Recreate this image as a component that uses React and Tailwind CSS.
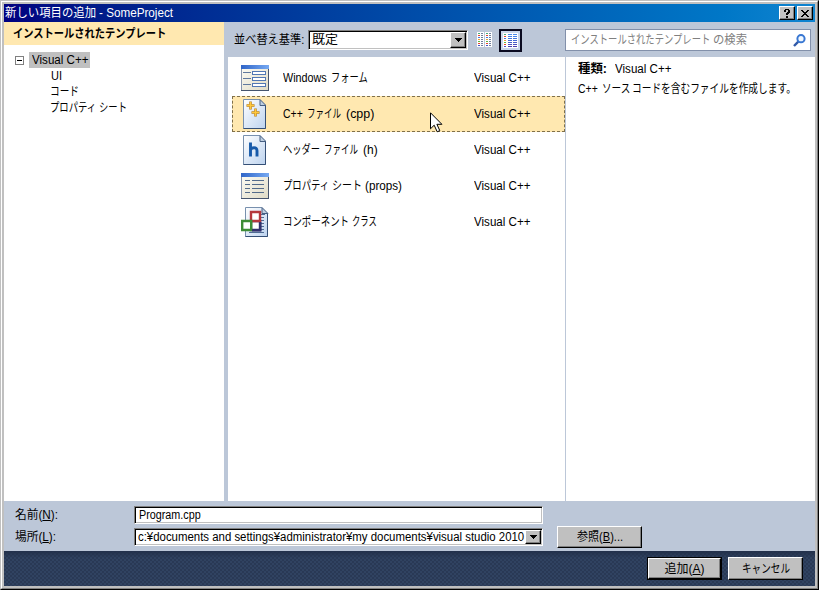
import { useLayoutEffect, useRef } from "react";

// A single-line label condensed or widened to the width of its box.
function T({ className = "", children }) {
  const outer = useRef(null);
  const inner = useRef(null);
  useLayoutEffect(() => {
    const w = outer.current.clientWidth;
    const n = inner.current.offsetWidth;
    if (n > 0) inner.current.style.transform = `scaleX(${w / n})`;
  }, []);
  return (
    <span ref={outer} className={`inline-block h-4 shrink-0 leading-4 ${className}`}>
      <span ref={inner} className="inline-block origin-left whitespace-nowrap">{children}</span>
    </span>
  );
}

const FormIcon = () => (
  <svg width="28" height="26" viewBox="0 0 28 26" shapeRendering="crispEdges">
    <rect width="28" height="26" fill="#8795ad" />
    <rect x="1" y="4" width="26" height="21" fill="url(#pane)" />
    <rect width="28" height="4" fill="url(#bar)" />
    <path d="M27.500 4v22M0 25.500h28" stroke="#46556e" />
    <path d="M2 7.500h8M2 13.500h8M2 19.500h8" stroke="#60799e" />
    <path d="M11.500 6.500h13v3h-13zM11.500 12.500h13v3h-13zM11.500 18.500h13v3h-13z" fill="#fff" stroke="#5278b4" />
  </svg>
);

const SheetIcon = () => (
  <svg width="28" height="26" viewBox="0 0 28 26" shapeRendering="crispEdges">
    <rect width="28" height="26" fill="#8795ad" />
    <rect x="1" y="4" width="26" height="21" fill="url(#pane)" />
    <rect width="28" height="4" fill="url(#bar)" />
    <path d="M27.500 4v22M0 25.500h28" stroke="#46556e" />
    <path d="M4 7.500h5M11 7.500h12M4 11.500h5M11 11.500h12M4 15.500h5M11 15.500h12M4 19.500h5M11 19.500h12" stroke="#536b8b" />
  </svg>
);

const Page = () => (
  <>
    <path d="M.5 .5h16l6 6v23h-22z" fill="url(#page)" stroke="#7890ae" />
    <path d="M22.500 6v23.500H.5" fill="none" stroke="#344f76" />
    <path d="M17 .5v6h6z" fill="#bdcee0" stroke="#465f82" />
  </>
);

const CppIcon = () => (
  <svg className="mr-[2px]" width="23" height="30" viewBox="0 0 23 30">
    <Page />
    <path d="M7.500 2.500v8M3.500 6.500h8M12.500 9.500v8M8.500 13.500h8" stroke="#b07a24" strokeWidth="2.600" />
    <path d="M7.500 3v7M4 6.500h7M12.500 10v7M9 13.500h7" stroke="#ffc83c" strokeWidth="1.600" />
  </svg>
);

const HeaderIcon = () => (
  <svg className="mr-[2px]" width="23" height="30" viewBox="0 0 23 30">
    <Page />
    <path d="M7.500 7.500v14M7.500 15c1-2.600 6.500-3.600 6.500.7v5.800" fill="none" stroke="#185aa9" strokeWidth="2.900" />
  </svg>
);

const ClassIcon = () => (
  <svg width="28" height="30" viewBox="0 0 28 30">
    <g transform="translate(4 0)"><Page /></g>
    <path d="M20 7.500h4M20 10.500h3M20 13.500h3M20 16.500h3M20 19.500h3M20 22.500h3M8 25.500h15" stroke="#4e6b94" />
    <path d="M10 14h9v9h-9z" fill="#fff" stroke="#30316c" strokeWidth="2.400" />
    <path d="M10 5h9v9h-9z" fill="#fff" stroke="#b5373c" strokeWidth="2.400" />
    <path d="M1.200 14h9v9h-9z" fill="#fff" stroke="#3d8c35" strokeWidth="2.400" />
    <path d="M11 23.500h8.500V15" fill="none" stroke="#30316c" strokeWidth="2" />
  </svg>
);

const rows = [
  { icon: <FormIcon />, label: <><T className="w-[44px]">Windows</T><T className="ml-1 w-[37px]">フォーム</T></> },
  { icon: <CppIcon />, selected: true, label: <><T className="w-[20px]">C++</T><T className="ml-1 w-[34px]">ファイル</T><T className="ml-[5px] w-[28px]">(cpp)</T></> },
  { icon: <HeaderIcon />, label: <><T className="w-[37px]">ヘッダー</T><T className="ml-1 w-[34px]">ファイル</T><T className="ml-[5px] w-[15px]">(h)</T></> },
  { icon: <SheetIcon />, label: <><T className="w-[46px]">プロパティ</T><T className="ml-[3px] w-[30px]">シート</T><T className="ml-[3px] w-[37px]">(props)</T></> },
  { icon: <ClassIcon />, label: <><T className="w-[66px]">コンポーネント</T><T className="ml-[3px] w-[25px]">クラス</T></> },
];

const bevel = "border border-t-white border-l-white border-r-black border-b-black bg-[#c0c0c0] shadow-[inset_-1px_-1px_0_#808080]";
const sunken = "border border-t-[#808080] border-l-[#808080] border-r-white border-b-white bg-white shadow-[inset_1px_1px_0_#000,inset_-1px_-1px_0_#c0c0c0]";

function DropButton({ className }) {
  return (
    <span className={`ml-auto flex w-4 shrink-0 items-center justify-center ${className} ${bevel}`}>
      <svg width="7" height="4" viewBox="0 0 7 4" shapeRendering="crispEdges"><path d="M0 0h7v1H6v1H5v1H4v1H3V3H2V2H1V1H0z" /></svg>
    </span>
  );
}

const tones = ["#4bab78", "#e8452d", "#4b79e0", "#e8a037", "#62b83c", "#e8452d", "#4b52c4"];
const bars = ["#4789ed", "#4380e8", "#4176df", "#4368d4", "#465cc9", "#494fbe", "#493eb0"];

function SmallList() {
  return (
    <svg width="15" height="15" viewBox="0 0 15 15" shapeRendering="crispEdges">
      <path d="M0 0h7v15H0zM8 0h7v15H8z" fill="#fff" />
      {tones.map((c, i) => (
        <g key={i}>
          <path d={`M1 ${i * 2 + 1}h2v1H1zM9 ${i * 2 + 1}h2v1H9z`} fill={c} />
          <path d={`M4 ${i * 2 + 1}h2v1H4zM12 ${i * 2 + 1}h2v1h-2z`} fill="#6f7f9c" />
        </g>
      ))}
    </svg>
  );
}

function MediumList() {
  return (
    <svg width="15" height="15" viewBox="0 0 15 15" shapeRendering="crispEdges">
      <rect width="15" height="15" fill="#fff" />
      {bars.map((c, i) => (
        <g key={i}>
          <path d={`M1 ${i * 2 + 1}h2v1H1z`} fill={tones[i]} />
          <path d={`M5 ${i * 2 + 1}h4v1H5zM10 ${i * 2 + 1}h4v1h-4z`} fill={c} />
        </g>
      ))}
    </svg>
  );
}

function TitleBar() {
  return (
    <header className="flex h-[18px] shrink-0 items-center bg-gradient-to-r from-[#000080] to-[#1084d0] pr-[2px] pl-px text-white">
      <T className="w-[91px]">新しい項目の追加</T>
      <T className="ml-[3px] w-[74px]">- SomeProject</T>
      <button className={`ml-auto flex h-[14px] w-4 items-center justify-center ${bevel}`}>
        <svg width="8" height="9" viewBox="0 0 8 9" shapeRendering="crispEdges"><path d="M2 0h4v1h1v3H6v1H5v1H3V4h1V3h1V1H3v2H1V1h1zM3 7h2v2H3z" /></svg>
      </button>
      <button className={`ml-[2px] flex h-[14px] w-4 items-center justify-center ${bevel}`}>
        <svg width="8" height="7" viewBox="0 0 8 7" shapeRendering="crispEdges"><path d="M0 0h2v1h1v1h2V1h1V0h2v1H7v1H6v1H5v1h1v1h1v1h1v1H6V6H5V5H3v1H2v1H0V6h1V5h1V4h1V3H2V2H1V1H0z" /></svg>
      </button>
    </header>
  );
}

function Sidebar() {
  return (
    <aside className="w-[220px] shrink-0 bg-white">
      <h2 className="flex h-[23px] items-center bg-[#ffe8b0] pl-[9px] font-bold"><T className="w-[153px]">インストールされたテンプレート</T></h2>
      <div className="mt-[7px] flex h-4 items-center pl-[11px]">
        <span className="flex h-[9px] w-[9px] items-center justify-center border border-[#808080]"><span className="h-px w-[5px] bg-black" /></span>
        <span className="ml-[5px] flex h-4 w-[61px] bg-[#c0c0c0] pl-[3px]"><T className="w-[56px]">Visual C++</T></span>
      </div>
      <ul className="pl-[46px]">
        <li className="flex h-4 pl-px"><T className="w-[11px]">UI</T></li>
        <li className="flex h-4"><T className="w-[29px]">コード</T></li>
        <li className="flex h-4"><T className="w-[46px]">プロパティ</T><T className="ml-[3px] w-[28px]">シート</T></li>
      </ul>
    </aside>
  );
}

function Toolbar() {
  return (
    <div className="flex h-[35px] shrink-0 items-start pt-[7px] pr-1 pl-[6px]">
      <T className="mt-[3px] w-[70px]">並べ替え基準:</T>
      <div className={`mt-px ml-1 flex h-5 w-[160px] items-start p-px pl-[3px] ${sunken}`}><T className="w-[26px]">既定</T><DropButton className="h-4" /></div>
      <div className="mt-[3px] ml-[9px]"><SmallList /></div>
      <div className="ml-[7px] flex h-[23px] w-[23px] items-center justify-center border-2 border-[#0a0a20] bg-[#c9d6ea]"><MediumList /></div>
      <div className="ml-auto flex h-[22px] w-[246px] items-center border border-[#8290aa] bg-white pr-1 pl-[5px] text-[#808080]">
        <T className="w-[139px]">インストールされたテンプレート</T><T className="ml-[3px] w-[34px]">の検索</T>
        <svg className="ml-auto" width="13" height="13" viewBox="0 0 13 13">
          <path d="M1 12l4.300-4.300" stroke="#3159a8" strokeWidth="2.400" />
          <circle cx="8" cy="4.700" r="3.600" fill="#f0f8ff" stroke="#3977d2" strokeWidth="2" />
        </svg>
      </div>
    </div>
  );
}

function TemplateList() {
  return (
    <ul className="w-[337px] bg-white pt-[3px] pl-1">
      {rows.map((r, i) => (
        <li key={i} className={r.selected ? "flex h-9 items-center border border-dashed border-[#80704a] bg-[#ffe8b0] pl-2" : "flex h-9 items-center pl-[9px]"}>
          <span className="flex w-7 justify-center">{r.icon}</span>
          <span className="ml-[14px] flex w-[191px]">{r.label}</span>
          <T className="w-[56px]">Visual C++</T>
        </li>
      ))}
    </ul>
  );
}

function Details() {
  return (
    <section className="flex-1 border-l border-[#bcc7d8] bg-white pt-1 pl-3">
      <div className="flex h-5"><T className="w-[29px] font-bold">種類:</T><T className="ml-[8px] w-[56px]">Visual C++</T></div>
      <div className="flex h-5"><T className="w-[20px]">C++</T><T className="ml-1 w-[28px]">ソース</T><T className="ml-[2px] w-[164px]">コードを含むファイルを作成します。</T></div>
    </section>
  );
}

function Fields() {
  return (
    <div className="flex h-[50px] shrink-0 pt-[5px] pl-[11px]">
      <div className="w-[119px] pt-px">
        <div className="flex h-[22px]"><T className="w-[43px]">名前(<u>N</u>):</T></div>
        <div className="flex h-[22px]"><T className="w-[41px]">場所(<u>L</u>):</T></div>
      </div>
      <div className="flex w-[409px] flex-col gap-1">
        <div className={`flex h-[18px] pl-1 ${sunken}`}><T className="w-[62px]">Program.cpp</T></div>
        <div className={`flex h-[18px] items-start py-px pr-px pl-[3px] ${sunken}`}>
          <T className="-mt-px w-[386px]">c:¥documents and settings¥administrator¥my documents¥visual studio 2010</T>
          <DropButton className="h-[14px]" />
        </div>
      </div>
      <button className={`mt-5 ml-[14px] flex h-[22px] w-[85px] items-center justify-center ${bevel}`}><T className="w-[46px]">参照(<u>B</u>)...</T></button>
    </div>
  );
}

export default function App() {
  return (
    <div className="h-[590px] w-[819px] border border-t-[#c0c0c0] border-r-black border-b-black border-l-[#c0c0c0] bg-[#c0c0c0] font-['Liberation_Sans','Noto_Sans_CJK_JP',sans-serif] text-[12px] text-black">
      <svg className="absolute h-0 w-0">
        <defs>
          <linearGradient id="bar"><stop stopColor="#2f65c8" /><stop offset="1" stopColor="#76a9f2" /></linearGradient>
          <linearGradient id="pane" x2="1" y2="1"><stop stopColor="#fbfaf2" /><stop offset="1" stopColor="#dfdbc7" /></linearGradient>
          <linearGradient id="page" x2="1" y2="1"><stop stopColor="#ffffff" /><stop offset="1" stopColor="#bdd3ef" /></linearGradient>
        </defs>
      </svg>
      <div className="flex h-[588px] flex-col border border-t-white border-r-[#808080] border-b-[#808080] border-l-white p-[2px]">
        <TitleBar />
        <main className="flex min-h-0 flex-1 bg-[#bcc7d8]">
          <Sidebar />
          <div className="ml-1 flex flex-1 flex-col">
            <Toolbar />
            <div className="flex flex-1"><TemplateList /><Details /></div>
          </div>
        </main>
        <div className="bg-[#bcc7d8]"><Fields /></div>
        <footer className="h-[35px] shrink-0 bg-[#293955] bg-[radial-gradient(circle_at_1px_1px,#35496a_0.5px,transparent_1px),radial-gradient(circle_at_3px_3px,#35496a_0.5px,transparent_1px)] bg-[size:4px_4px]">
          <div className="flex h-full justify-end gap-[6px] bg-gradient-to-b from-[#22304a] to-transparent to-20% pt-[6px] pr-3">
            <button className="h-[23px] w-[75px] border border-black"><span className={`flex h-[21px] items-center justify-center ${bevel}`}><T className="w-[40px]">追加(<u>A</u>)</T></span></button>
            <button className={`flex h-[23px] w-[75px] items-center justify-center ${bevel}`}><T className="w-[48px]">キャンセル</T></button>
          </div>
        </footer>
      </div>
      <svg className="absolute top-[112px] left-[430px]" width="13" height="21" viewBox="0 0 13 21">
        <path d="M.5 .8v16l3.700-3.600 3 6.600 2.600-1.200-2.900-6.300h5z" fill="#fff" stroke="#000" />
      </svg>
    </div>
  );
}
